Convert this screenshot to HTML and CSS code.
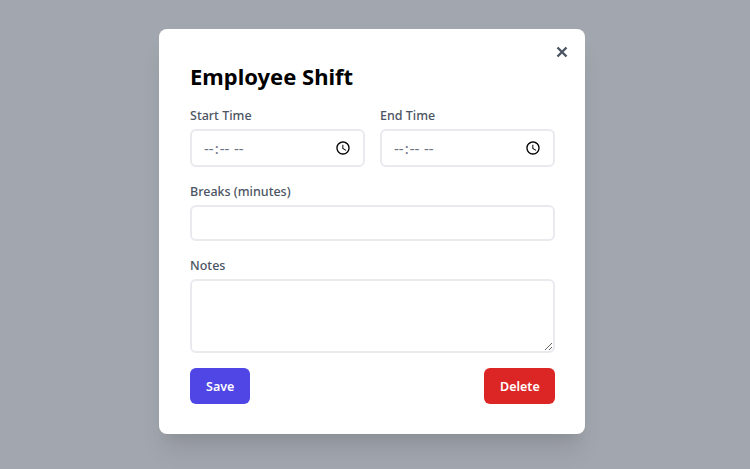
FILE: index.html
```html
<!DOCTYPE html>
<html lang="en">
<head>
  <meta charset="UTF-8" />
  <meta name="viewport" content="width=device-width, initial-scale=1" />
  <title>Employee Shift</title>
  <link rel="stylesheet" href="styles.css">
</head>
<body>
  <div class="overlay">
    <form class="modal">
      <button type="button" class="close" aria-label="Close">
        <svg viewBox="0 0 12 12" width="12" height="12"><path d="M1.5 1.5l9 9M10.5 1.5l-9 9" /></svg>
      </button>
      <h2>Employee Shift</h2>
      <div class="row">
        <div class="field">
          <label for="start">Start Time</label>
          <input type="time" id="start" />
        </div>
        <div class="field">
          <label for="end">End Time</label>
          <input type="time" id="end" />
        </div>
      </div>
      <div class="field">
        <label for="breaks">Breaks (minutes)</label>
        <input type="number" id="breaks" class="breaks" />
      </div>
      <div class="field">
        <label for="notes">Notes</label>
        <textarea id="notes"></textarea>
      </div>
      <div class="actions">
        <button type="button" class="btn save">Save</button>
        <button type="button" class="btn delete">Delete</button>
      </div>
    </form>
  </div>
</body>
</html>
```

FILE: styles.css
```css
* {
  box-sizing: border-box;
}

body {
  margin: 0;
  font-family: "Noto Sans", "Open Sans", sans-serif;
}

.overlay {
  height: 469px;
  padding: 29px 6px 0 0;
  background-color: #a2a6ae;
  overflow: hidden;
}

.modal {
  position: relative;
  width: 426px;
  height: 405px;
  margin: 0 auto;
  padding: 31px 30px 30px 31px;
  background: white;
  border-radius: 8px;
  box-shadow: 0 20px 25px -5px rgba(0,0,0,0.1), 0 10px 10px -5px rgba(0,0,0,0.04);
}

.close {
  position: absolute;
  top: 16px;
  right: 16px;
  width: 14px;
  height: 14px;
  padding: 1px;
  border: none;
  background: none;
  display: flex;
}

.close svg {
  fill: none;
  stroke: #4b5563;
  stroke-width: 2.4;
}

h2 {
  margin: 0 0 14px;
  font-size: 22px;
  line-height: 32px;
  font-weight: 700;
  color: #000;
}

.row {
  display: flex;
  gap: 15px;
}

.row .field {
  flex: 1;
}

.field {
  margin-bottom: 15px;
}

label {
  display: block;
  margin-bottom: 3px;
  font-size: 12.5px;
  line-height: 20px;
  font-weight: 500;
  color: #4b5563;
}

input, textarea {
  display: block;
  width: 100%;
  border: 2px solid #e8eaee;
  border-radius: 6px;
  padding: 0 9px 0 11px;
  font-family: inherit;
  font-size: 15px;
  letter-spacing: 0.6px;
  color: #6b7280;
  background: white;
  outline: none;
}

input[type='time'] {
  height: 38px;
}

.breaks {
  height: 36px;
}

textarea {
  height: 74px;
  padding-top: 8px;
}

.actions {
  display: flex;
  justify-content: space-between;
}

.btn {
  height: 36px;
  border: none;
  border-radius: 6px;
  padding: 0 16px;
  font-family: inherit;
  font-size: 12.5px;
  font-weight: 600;
  color: white;
}

.save {
  width: 60px;
  background-color: #4f46e5;
}

.delete {
  width: 71px;
  background-color: #dc2626;
}
```
